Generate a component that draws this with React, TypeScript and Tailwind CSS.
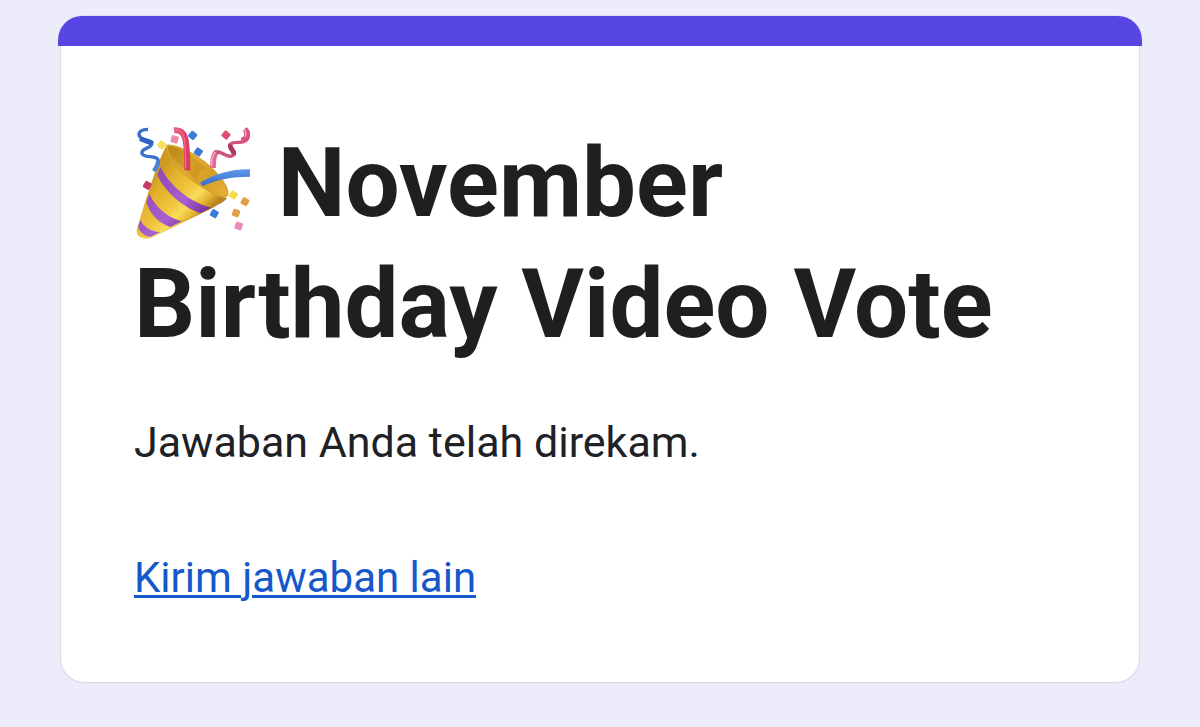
import type { ReactNode } from 'react';

const confetti = [
  { x: 110, y: 92, fill: '#f3df5c', turn: 40 },
  { x: 149, y: 75, fill: '#ee88ad', turn: 15 },
  { x: 203, y: 63, fill: '#3f7bd2', turn: 40 },
  { x: 220, y: 113, fill: '#3f7bd2', turn: 35 },
  { x: 303, y: 62, fill: '#e04f72', turn: 40 },
  { x: 67, y: 213, fill: '#c43d63', turn: 30 },
  { x: 325, y: 242, fill: '#f6dc48', turn: 35 },
  { x: 360, y: 262, fill: '#e0a04a', turn: 30 },
  { x: 333, y: 296, fill: '#e0a04a', turn: 20 },
  { x: 268, y: 298, fill: '#3a7ad6', turn: 30 },
  { x: 341, y: 335, fill: '#e48bbb', turn: 20 },
];

function PartyPopper() {
  return (
    <svg
      viewBox="27 29 360 360"
      className="inline-block size-[120px] align-[-28px]"
      role="img"
      aria-label="Party popper"
    >
      <defs>
        <linearGradient id="cone" gradientUnits="userSpaceOnUse" x1="75" y1="200" x2="210" y2="330">
          <stop offset="0" stopColor="#cf9a22" />
          <stop offset="0.2" stopColor="#e3b02c" />
          <stop offset="0.5" stopColor="#f0c43c" />
          <stop offset="0.7" stopColor="#f9dc5c" />
          <stop offset="0.85" stopColor="#e5b630" />
          <stop offset="1" stopColor="#b8841f" />
        </linearGradient>
        <linearGradient id="mouth" gradientUnits="userSpaceOnUse" x1="130" y1="100" x2="300" y2="250">
          <stop offset="0" stopColor="#b98518" />
          <stop offset="0.35" stopColor="#e3ae2e" />
          <stop offset="0.65" stopColor="#d6a027" />
          <stop offset="1" stopColor="#eaae35" />
        </linearGradient>
        <linearGradient id="band" gradientUnits="userSpaceOnUse" x1="75" y1="200" x2="210" y2="330">
          <stop offset="0" stopColor="#8f48b4" />
          <stop offset="0.6" stopColor="#ab60d0" />
          <stop offset="1" stopColor="#74329a" />
        </linearGradient>
        <linearGradient id="pinkRibbon" x1="0" y1="0" x2="1" y2="0">
          <stop offset="0" stopColor="#ee5f88" />
          <stop offset="1" stopColor="#dc3a63" />
        </linearGradient>
        <linearGradient id="blueRibbon" x1="0" y1="0" x2="0" y2="1">
          <stop offset="0" stopColor="#5e98ea" />
          <stop offset="1" stopColor="#356cc8" />
        </linearGradient>
        <clipPath id="coneShape">
          <path d="M126 92C138 150 224 233 306 251C300 262 282 268 262 281L82 369C64 379 32 370 35 350C43 318 101 126 126 92Z" />
        </clipPath>
      </defs>

      <g clipPath="url(#coneShape)">
        <path fill="url(#cone)" d="M20 80H320V390H20Z" />
        <path fill="url(#band)" d="M106 157C130 205 184 260 258 280L226 297C164 274 113 222 97 181Z" />
        <path fill="url(#band)" d="M73 238C91 277 126 309 170 321L136 338C101 327 75 300 64 264Z" />
        <path fill="url(#band)" d="M46 316C56 336 75 351 105 353L77 367C58 366 44 352 39 337Z" />
        <path fill="none" stroke="#9e6a16" strokeOpacity="0.4" strokeWidth="7" d="M78 375L304 261" />
      </g>

      {/* open end of the cone */}
      <path
        fill="url(#mouth)"
        d="M126 92C148 88 200 112 240 144C282 178 316 222 309 243C303 260 262 240 221 213C169 179 119 124 126 92Z"
      />
      <path fill="#b8841c" fillOpacity="0.4" d="M137 99C165 101 215 133 248 165C228 160 216 180 219 199C180 174 145 132 137 99Z" />
      <path
        fill="none"
        stroke="#d9a52c"
        strokeWidth="5"
        d="M127 94C148 90 200 112 240 144C282 178 314 222 307 242C301 256 262 238 221 211C169 177 121 124 127 94Z"
      />

      {/* streamers */}
      <path fill="none" stroke="url(#pinkRibbon)" strokeWidth="18" d="M147 48C184 44 186 76 187 168" />
      <path fill="none" stroke="#f17b9b" strokeWidth="3" d="M152 45C181 46 181 76 182 160" />
      <path fill="url(#blueRibbon)" d="M225 205C270 178 320 164 375 165V187C315 187 281 195 233 215Z" />
      <path
        fill="none"
        stroke="#3b70cd"
        strokeWidth="10"
        strokeLinejoin="round"
        d="M69 45C42 45 37 59 47 70C59 81 84 79 80 90C75 104 46 102 51 118C58 132 97 121 100 139C102 151 94 159 86 170"
      />
      <path fill="none" stroke="#2f62c0" strokeWidth="15" d="M46 73C59 81 75 80 81 88" />
      <path fill="none" stroke="#4a82d8" strokeWidth="13" d="M99 139C100 151 94 160 87 169" />
      <path fill="none" stroke="#e4688f" strokeWidth="17" d="M264 161C264 136 265 118 277 113" />
      <path
        fill="none"
        stroke="#cc5379"
        strokeWidth="10"
        d="M268 117C285 101 303 135 323 124C341 112 308 98 318 88C332 78 363 94 370 66C372 55 369 47 360 44"
      />
      <path fill="none" stroke="#a9375f" strokeWidth="14" d="M325 121C330 109 310 102 317 90" />
      <path fill="none" stroke="#e0527e" strokeWidth="16" d="M349 79C366 76 370 57 360 44" />
      <path fill="none" stroke="#f7a3bb" strokeWidth="5" d="M260 155C259 135 262 120 272 113M359 68C364 60 363 51 357 47" />

      {confetti.map((c) => (
        <rect
          key={`${c.x}-${c.y}`}
          x={c.x - 11}
          y={c.y - 11}
          width="22"
          height="22"
          rx="4"
          fill={c.fill}
          transform={`rotate(${c.turn} ${c.x} ${c.y})`}
        />
      ))}
    </svg>
  );
}

function FormCard({ children }: { children: ReactNode }) {
  return (
    <section className="rounded-[24px] bg-white shadow-[0_0_0_1px_#dddce4,0_1px_2px_#dddce4]">
      <div className="-mx-[3px] h-[30px] rounded-t-[24px] bg-[#5746e3]" />
      <div className="px-[73px] pt-[77px] pb-[74px]">{children}</div>
    </section>
  );
}

export default function App() {
  return (
    <main className="min-h-screen bg-[#edecfb] px-[61px] py-4 font-['Roboto',sans-serif] text-[#202124]">
      <FormCard>
        <h1 className="text-[96px] leading-[120px] font-bold text-[#1f1f1f]">
          <PartyPopper /> November
          <br />
          Birthday Video Vote
        </h1>
        <p className="mt-[48px] text-[43px] leading-[60px]">Jawaban Anda telah direkam.</p>
        <a
          href="#"
          className="mt-[76px] inline-block text-[42px] leading-[60px] text-[#1558ca] underline decoration-[3px] underline-offset-[3px]"
        >
          Kirim jawaban lain
        </a>
      </FormCard>
    </main>
  );
}
